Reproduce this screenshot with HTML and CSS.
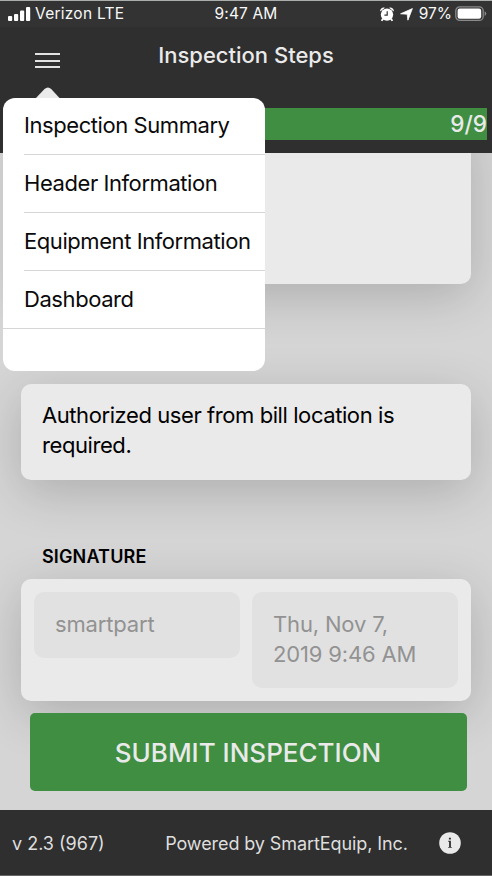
FILE: index.html
```html
<!DOCTYPE html>
<html lang="en">
<head>
<meta charset="utf-8">
<title>Inspection Steps</title>
<link rel="stylesheet" href="styles.css">
</head>
<body>
<div class="app">
  <header class="header">
    <div class="status">
      <div class="carrier">
        <svg class="signal" width="23" height="14" viewBox="0 0 23 14"><rect x="0" y="9" width="4.2" height="5" rx="1"/><rect x="6" y="7" width="4.2" height="7" rx="1"/><rect x="12" y="3.4" width="4.2" height="10.6" rx="1"/><rect x="18" y="0" width="4.2" height="14" rx="1"/></svg>
        <span class="carrier-name">Verizon LTE</span>
      </div>
      <span class="clock">9:47 AM</span>
      <div class="power">
        <svg class="alarm" width="14" height="15" viewBox="0 0 14 15"><circle cx="7" cy="7.6" r="6.2"/><path d="M.2 4.4A3.4 3.4 0 0 1 5 .8zM13.8 4.4A3.4 3.4 0 0 0 9 .8zM2.1 11.2.9 13.4l1.4.8 1.7-2zM11.9 11.2l1.2 2.2-1.4.8-1.7-2z"/><path class="hands" d="M7.2 4.2v4H4.4"/></svg>
        <svg class="arrow" width="13" height="13" viewBox="0 0 13 13"><path d="M12.4.6 7.9 12.2 7.2 6.2.6 5.8z"/></svg>
        <span class="percent">97%</span>
        <svg class="battery" width="32" height="16" viewBox="0 0 32 16"><rect class="shell" x=".8" y=".8" width="27.4" height="13.6" rx="4"/><rect x="2.6" y="2.5" width="23.6" height="10.2" rx="2.2"/><path class="tip" d="M29.6 5.2q1.7.8 1.7 2.4t-1.7 2.4z"/></svg>
      </div>
    </div>
    <div class="toolbar">
      <div class="menu-button"><i></i><i></i><i></i></div>
      <h1 class="title">Inspection Steps</h1>
    </div>
    <div class="progress"><span>9/9</span></div>
  </header>

  <main class="content">
    <section class="card card-blank"></section>
    <section class="card card-note">Authorized user from bill location is required.</section>
    <h2 class="label">SIGNATURE</h2>
    <section class="card card-sign">
      <div class="field field-name">smartpart</div>
      <div class="field field-date">Thu, Nov 7,<br>2019 9:46 AM</div>
    </section>
    <button class="submit"><span>SUBMIT INSPECTION</span></button>
  </main>

  <footer class="footer">
    <span class="version">v 2.3 (967)</span>
    <span class="powered">Powered by SmartEquip, Inc.</span>
    <svg class="info" width="22" height="22" viewBox="0 0 22 22"><circle cx="11" cy="11" r="10.8"/><path class="glyph" d="M9.9 5.8h2v1.7h-2zM9.2 8.8h2.7v6.1h.9v.9H9.2v-.9h.9V9.7h-.9z"/></svg>
  </footer>

  <nav class="popover">
    <svg class="pointer" width="24" height="11" viewBox="0 0 24 11"><path d="M0 11 8.5 2Q12-1.2 15.2 2L23.5 11z"/></svg>
    <ul class="menu">
      <li>Inspection Summary</li>
      <li>Header Information</li>
      <li>Equipment Information</li>
      <li>Dashboard</li>
    </ul>
  </nav>
</div>
</body>
</html>
```
FILE: styles.css
```css
* { box-sizing: border-box; }
body { margin: 0; font-family: Inter, "Liberation Sans", sans-serif; }
.app {
  position: relative;
  display: flex;
  flex-direction: column;
  width: 492px;
  height: 876px;
  overflow: hidden;
  background: #d5d5d5;
}
.header {
  position: relative;
  z-index: 1;
  height: 153px;
  flex: none;
  background: #2f2f2f;
  border-top: 1px solid #a9adab;
}
.status {
  display: grid;
  grid-template-columns: 1fr auto 1fr;
  align-items: center;
  height: 26px;
  padding: 0 5px 0 8px;
  background: #333;
  color: #f8f8f8;
  font-size: 15.5px;
  line-height: 26px;
}
.status svg { fill: #fff; flex: none; }
.carrier, .power { display: flex; align-items: center; }
.carrier { gap: 4px; letter-spacing: .25px; }
.clock { letter-spacing: .15px; margin-right: 3px; }
.power { justify-content: flex-end; }
.arrow { margin: 0 6px 0 6px; }
.battery { margin-left: 3px; }
.status .shell { fill: none; stroke: #8a8a8a; stroke-width: 1.3; }
.status .tip { fill: #8a8a8a; }
.status .hands { fill: none; stroke: #333; stroke-width: 1.2; }
.status .arrow { stroke: #fff; stroke-width: .8; stroke-linejoin: round; }
.toolbar {
  display: flex;
  align-items: center;
  justify-content: center;
  height: 55px;
  position: relative;
}
.menu-button {
  position: absolute;
  left: 35px;
  top: 26px;
  display: flex;
  flex-direction: column;
  gap: 4px;
}
.menu-button i { width: 25px; height: 2px; margin-top: .3px; background: #e2e2e2; }
.title {
  margin: 0;
  color: #eaeaea;
  font-size: 22px;
  font-weight: 500;
  line-height: 30px;
}
.progress {
  margin: 26px 5px 0 5px;
  height: 32px;
  background: #3f8e42;
  color: #eaeaea;
  font-size: 22.5px;
  font-weight: 500;
  line-height: 32px;
  text-align: right;
}
.content { flex: 1; padding: 0 21px; display: flex; flex-direction: column; }
.card {
  border-radius: 10px;
  background: #eaeaea;
  box-shadow: 0 12px 50px rgba(0, 0, 0, .19);
  flex: none;
}
.card-blank { height: 161px; margin-top: -30px; }
.card-note {
  height: 96px;
  margin-top: 100px;
  padding: 16px 21px;
  font-size: 22px;
  line-height: 30px;
  letter-spacing: -.42px;
}
.label {
  margin: 67px 0 0 21px;
  font-size: 18px;
  font-weight: 600;
  line-height: 20px;
  letter-spacing: .15px;
}
.card-sign {
  display: flex;
  align-items: flex-start;
  gap: 12px;
  height: 122px;
  margin-top: 12px;
  padding: 13px;
}
.field {
  flex: 1;
  padding: 17px 21px 19px;
  border-radius: 10px;
  background: #e1e1e1;
  color: #929292;
  font-size: 22px;
  line-height: 30px;
  letter-spacing: -.16px;
}
.submit {
  height: 78px;
  margin: 12px 4px 0 9px;
  padding: 1px 1px 0 0;
  border: 0;
  border-radius: 5px;
  background: #3f8e42;
  color: #eaeaea;
  font: 500 26px/77px Inter, "Liberation Sans", sans-serif;
  position: relative;
}
.footer {
  display: flex;
  align-items: center;
  height: 66px;
  padding: 0 31px 0 12px;
  background: #2f2f2f;
  border-bottom: 1px solid #666;
  color: #dedede;
  font-size: 18px;
  line-height: 24px;
  position: relative;
}
.version, .powered { padding-top: 2px; }
.powered { margin-left: 60.5px; letter-spacing: -.09px; }
.info { margin-left: auto; fill: #eaeaea; }
.glyph { fill: #2f2f2f; }
.popover { position: absolute; z-index: 2; left: 3px; top: 87px; width: 262px; }
.pointer { display: block; margin-left: 33px; fill: #eaeaea; }
.menu {
  margin: 0;
  padding: 0;
  height: 273px;
  list-style: none;
  border-radius: 12px;
  background: #fff;
  font-size: 22px;
  line-height: 57px;
  letter-spacing: -.43px;
  color: #0a0a0a;
  white-space: nowrap;
}
.menu li { height: 57.8px; margin-left: 21px; border-bottom: 1px solid #d6d6d6; }
.menu li:first-child { height: 57px; line-height: 55px; }
.menu li:last-child { height: 58px; margin-left: 0; padding-left: 21px; }
```
